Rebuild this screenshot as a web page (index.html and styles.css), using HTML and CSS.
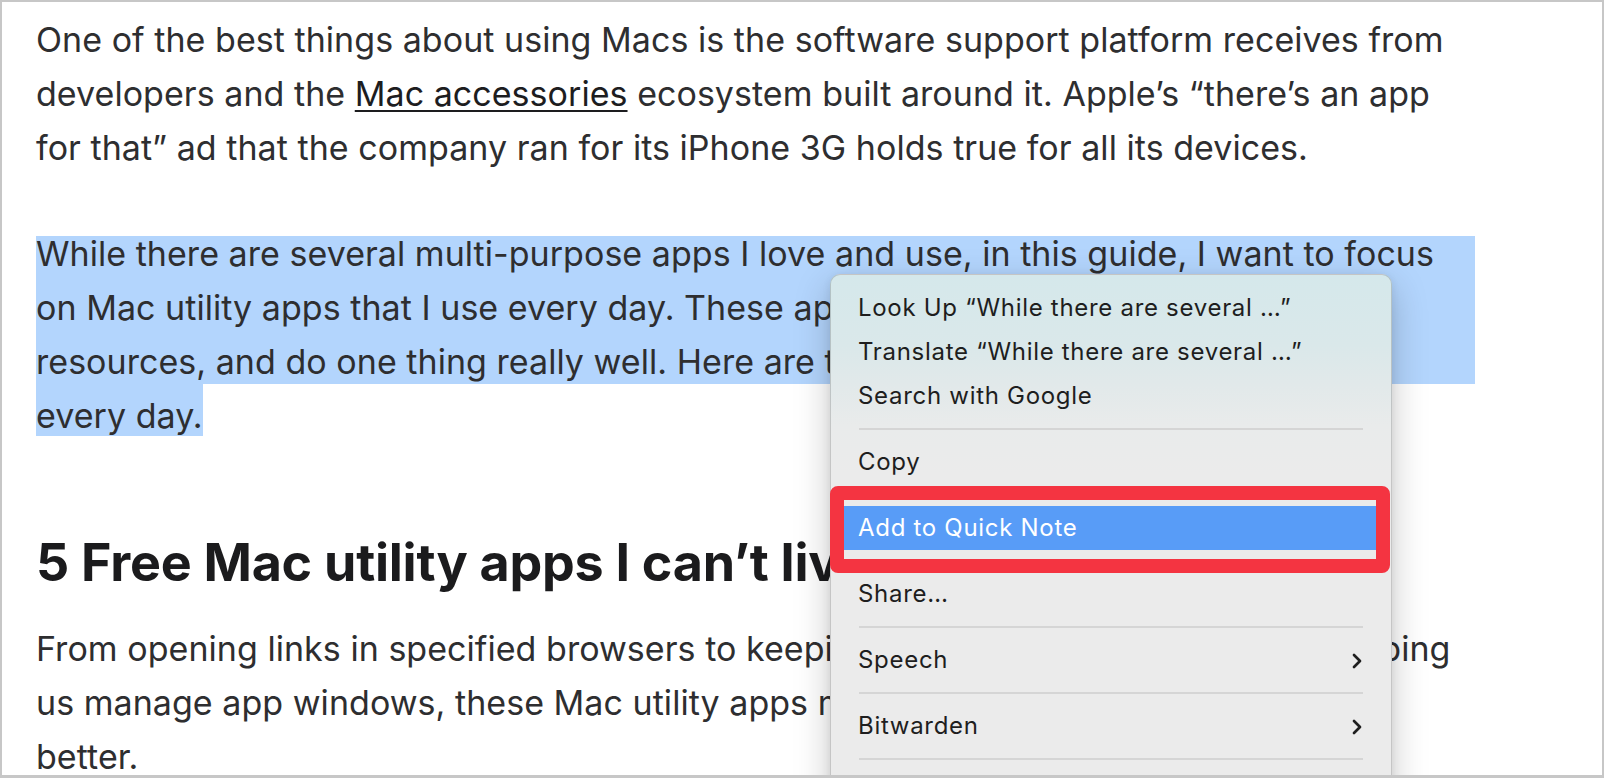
FILE: index.html
```html
<!DOCTYPE html>
<html lang="en">
<head>
<meta charset="utf-8">
<title>Mac utility apps</title>
<link rel="stylesheet" href="styles.css">
</head>
<body>
<div class="frame">
  <div class="page">
    <article class="content">
      <p class="para">One of the best things about using Macs is the software support platform receives from<br>developers and the <a class="link" href="#">Mac accessories</a> ecosystem built around it. Apple’s “there’s an app<br>for that” ad that the company ran for its iPhone 3G holds true for all its devices.</p>
      <p class="para sel-para"><span class="sel-block">While there are several multi-purpose apps I love and use, in this guide, I want to focus<br>on Mac utility apps that I use every day. These apps are lightweight, use minimal<br>resources, and do one thing really well. Here are the ones I use</span><span class="sel-last">every day.</span></p>
      <h2 class="heading">5 Free Mac utility apps I can’t live without</h2>
      <p class="para">From opening links in specified browsers to keepi<span class="tucked">ng your Mac awake all day and hel</span>ping<br>us manage app windows, these Mac utility apps make my daily work<br>better.</p>
    </article>

    <div class="menu">
      <div class="item">Look Up “While there are several …”</div>
      <div class="item">Translate “While there are several …”</div>
      <div class="item">Search with Google</div>
      <div class="sep"></div>
      <div class="item">Copy</div>
      <div class="sep"></div>
      <div class="item item-active">Add to Quick Note</div>
      <div class="sep"></div>
      <div class="item">Share…</div>
      <div class="sep"></div>
      <div class="item item-sub">Speech
        <svg class="chev" viewBox="0 0 10 16" width="10" height="16"><path d="M2 2 L8 8 L2 14" fill="none" stroke="#1f1f1f" stroke-width="2.7" stroke-linecap="round" stroke-linejoin="round"/></svg>
      </div>
      <div class="sep"></div>
      <div class="item item-sub">Bitwarden
        <svg class="chev" viewBox="0 0 10 16" width="10" height="16"><path d="M2 2 L8 8 L2 14" fill="none" stroke="#1f1f1f" stroke-width="2.7" stroke-linecap="round" stroke-linejoin="round"/></svg>
      </div>
      <div class="sep"></div>
      <div class="item">Services</div>
      <div class="annot"></div>
    </div>
  </div>
</div>
</body>
</html>
```

FILE: styles.css
```css
* { box-sizing: border-box; }
html, body { margin: 0; padding: 0; background: #ffffff; }

.frame {
  width: 1604px;
  height: 778px;
  border: 2px solid #c7c7c7;
  border-bottom-width: 3px;
  background: #ffffff;
}

.page {
  position: relative;
  width: 100%;
  height: 100%;
  overflow: hidden;
}

.content {
  padding: 11px 0 0 34px;
  width: 1473px;
  font-family: "Inter", "Liberation Sans", sans-serif;
  color: #2e2e30;
}

.para {
  margin: 0 0 52px 0;
  font-size: 34px;
  line-height: 54px;
  white-space: nowrap;
  letter-spacing: 0.04px;
}

.tucked { letter-spacing: -0.22px; }

.link {
  color: #1d1d1f;
  text-decoration: underline;
  text-decoration-thickness: 2px;
  text-underline-offset: 4px;
}

.sel-para { margin-bottom: 90px; }

.sel-block {
  display: block;
  background: linear-gradient(#b3d5fd, #b3d5fd) 0 9px / 100% 148px no-repeat;
}

.sel-last {
  background: #b3d5fd;
  padding-top: 12px;
}

.heading {
  margin: 0 0 29px 0;
  font-size: 52px;
  line-height: 60px;
  font-weight: 700;
  letter-spacing: -0.25px;
  color: #1b1b1d;
  white-space: nowrap;
}

.menu {
  position: absolute;
  left: 828px;
  top: 272px;
  width: 562px;
  height: 560px;
  padding-top: 11px;
  border-radius: 10px;
  border: 1px solid rgba(0, 0, 0, 0.16);
  background: linear-gradient(180deg, #d5e8eb 0px, #dae8ea 70px, #e2e9ea 112px, #e9ebeb 150px, #ebebeb 200px, #ebebeb 100%);
  box-shadow: 0 12px 36px rgba(0, 0, 0, 0.22), 0 2px 8px rgba(0, 0, 0, 0.08);
  font-family: "Inter", "Liberation Sans", sans-serif;
  font-size: 24px;
  color: #1e1e1e;
}

.item {
  height: 44px;
  line-height: 44px;
  padding: 0 29px 0 27px;
  white-space: nowrap;
  letter-spacing: 0.7px;
}

.item-sub {
  display: flex;
  justify-content: space-between;
  align-items: center;
}

.chev { display: block; margin-top: 2px; }

.item-active {
  margin: 0 5px;
  padding-left: 22px;
  border-radius: 5px;
  background: #589cf7;
  color: #ffffff;
}

.sep {
  height: 2px;
  margin: 10px 28px;
  background: #d5d5d5;
}

.annot {
  position: absolute;
  left: -1px;
  top: 211px;
  width: 560px;
  height: 87px;
  border: 14px solid #f43441;
  border-radius: 8px;
}
```
